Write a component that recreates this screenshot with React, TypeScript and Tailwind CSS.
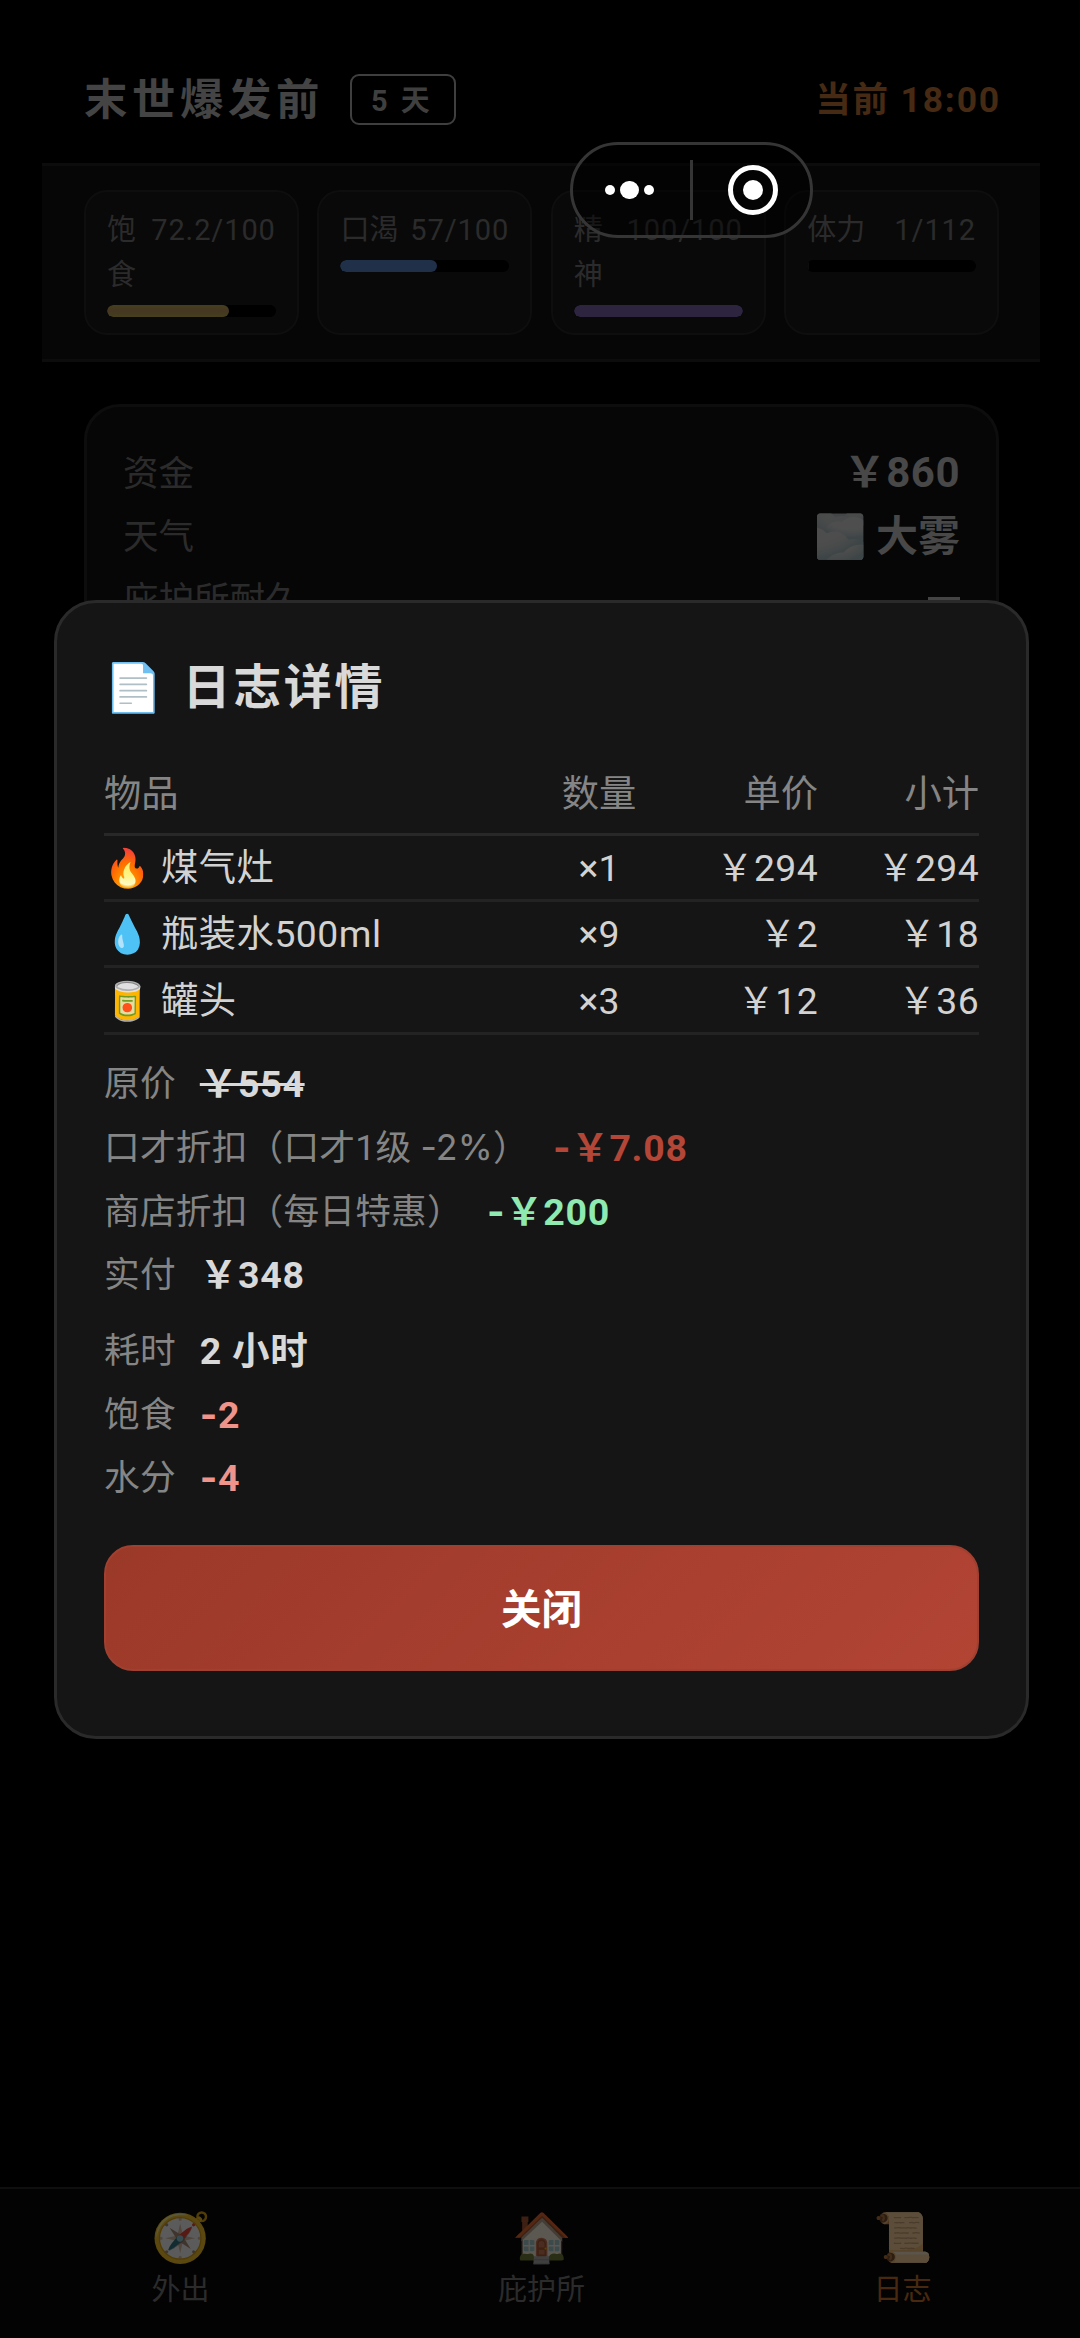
type Stat = {
  name: string;
  value: string;
  percent: number;
  bar: string;
};

type LogItem = {
  icon: string;
  name: string;
  qty: string;
  price: string;
  total: string;
};

type SummaryLine = {
  label: string;
  value: string;
  tone: string;
};

const stats: Stat[] = [
  { name: "饱食", value: "72.2/100", percent: 72.2, bar: "bg-linear-to-b from-[#453f1d] via-[#453722] to-[#453f1d]" },
  { name: "口渴", value: "57/100", percent: 57, bar: "bg-[#1f3048]" },
  { name: "精神", value: "100/100", percent: 100, bar: "bg-[#2d2440]" },
  { name: "体力", value: "1/112", percent: 1, bar: "bg-[#0c0c0c]" },
];

const items: LogItem[] = [
  { icon: "🔥", name: "煤气灶", qty: "×1", price: "￥294", total: "￥294" },
  { icon: "💧", name: "瓶装水500ml", qty: "×9", price: "￥2", total: "￥18" },
  { icon: "🥫", name: "罐头", qty: "×3", price: "￥12", total: "￥36" },
];

const costLines: SummaryLine[] = [
  { label: "原价", value: "￥554", tone: "text-[#d9d9d9] line-through" },
  { label: "口才折扣（口才1级 -2%）", value: "-￥7.08", tone: "text-[#b34636]" },
  { label: "商店折扣（每日特惠）", value: "-￥200", tone: "text-[#8eeab0]" },
  { label: "实付", value: "￥348", tone: "text-[#d9d9d9]" },
];

const effectLines: SummaryLine[] = [
  { label: "耗时", value: "2 小时", tone: "text-[#d9d9d9]" },
  { label: "饱食", value: "-2", tone: "text-[#f0938a]" },
  { label: "水分", value: "-4", tone: "text-[#f0938a]" },
];

const tabs = [
  { icon: "🧭", label: "外出", active: false },
  { icon: "🏠", label: "庇护所", active: false },
  { icon: "📜", label: "日志", active: true },
];

// Minus signs and percents use Inter, whose hyphen is wider than Roboto's.
function Signed({ text }: { text: string }) {
  return (
    <>
      {text.split(/(-2%|-)/).map((part, i) =>
        part.startsWith("-") ? (
          <span key={i} className="font-[Inter,sans-serif]">
            {part}
          </span>
        ) : (
          part
        ),
      )}
    </>
  );
}

function TopBar() {
  return (
    <header className="mr-[40px] ml-[42px] flex h-[166px] items-center justify-between border-b-[3px] border-[#0c0c0c] pt-[36px] pr-[39px] pl-[42px]">
      <div className="flex items-center">
        <h1 className="pt-[2px] text-[43.4px] leading-[60px] font-bold tracking-[4.6px] text-[#444]">末世爆发前</h1>
        <span className="ml-[26px] flex h-[51px] w-[106px] items-center justify-center rounded-[9px] border-[2.5px] border-[#3f3f3f] pt-[3px] pr-[2px] text-[29px] leading-none font-bold tracking-[3px] text-[#3f3f3f]">
          5 天
        </span>
      </div>
      <span className="text-[35.5px] leading-[48px] font-bold tracking-[1.8px] text-[#472a13]">当前 18:00</span>
    </header>
  );
}

function StatCard({ stat }: { stat: Stat }) {
  return (
    <div className="h-[145px] rounded-[23px] border-[2.5px] border-[#0e0e0e] bg-[#090909] px-[21px] pt-[16px]">
      <div className="flex justify-between text-[29px] leading-[45px] text-[#2b2b2b]">
        <span className="min-w-0">{stat.name}</span>
        <span className="shrink-0 tracking-[0.9px]">{stat.value}</span>
      </div>
      <div className="mt-[6.5px] h-[12.5px] overflow-hidden rounded-full bg-black">
        <div className={`h-full rounded-full ${stat.bar}`} style={{ width: `${stat.percent}%` }} />
      </div>
    </div>
  );
}

function InfoCard() {
  return (
    <section className="mt-[42px] mr-[81px] ml-[84px] h-[360px] rounded-[36px] border-[3px] border-[#0d0d0d] bg-[#060606] px-[36px] pt-[35.5px] text-[35.5px] leading-[63px] text-[#2b2b2b]">
      <div className="flex justify-between">
        <span>资金</span>
        <span className="-mt-[2px] text-[42px] font-bold tracking-[0.5px] text-[#484848]">￥860</span>
      </div>
      <div className="flex justify-between">
        <span>天气</span>
        <span className="-mt-[2px] flex items-center text-[42px] font-bold text-[#484848]">
          <span className="mr-[10px] opacity-30">🌫️</span>
          大雾
        </span>
      </div>
      <div className="flex justify-between">
        <span>庇护所耐久</span>
        <span className="mt-[28px] h-[5px] w-[32px] bg-[#444]" />
      </div>
    </section>
  );
}

function Capsule() {
  return (
    <div className="absolute top-[142px] left-[570px] flex h-[96px] w-[243px] items-center rounded-full border-[3px] border-[#353535] bg-black/45">
      <div className="flex w-[117px] items-center justify-center gap-[5px] pr-[4px]">
        <i className="size-[10.5px] rounded-full bg-white" />
        <i className="size-[18.5px] rounded-full bg-white" />
        <i className="size-[10.5px] rounded-full bg-white" />
      </div>
      <div className="h-[60px] w-[3px] bg-[#353535]" />
      <div className="flex flex-1 items-center justify-center pl-[2px]">
        <div className="flex size-[50px] items-center justify-center rounded-full border-[5px] border-white">
          <i className="size-[20px] rounded-full bg-white" />
        </div>
      </div>
    </div>
  );
}

function Summary({ lines }: { lines: SummaryLine[] }) {
  return (
    <>
      {lines.map((line) => (
        <div key={line.label} className="flex h-[63.7px] items-center gap-[24px] pt-[4px]">
          <span className="text-[35.7px] tracking-[0.2px] text-[#858585]">
            <Signed text={line.label} />
          </span>
          <span className={`-mt-px text-[37.5px] font-bold tracking-[0.7px] ${line.tone}`}>
            <Signed text={line.value} />
          </span>
        </div>
      ))}
    </>
  );
}

function LogDialog() {
  return (
    <div
      role="dialog"
      className="absolute top-[600px] left-[54px] h-[1139px] w-[975px] rounded-[42px] border-[3px] border-[#2a2a2a] bg-[#151515] px-[47px]"
    >
      <h2 className="mt-[53px] flex h-[64px] items-center text-[48px] font-bold tracking-[2.6px] text-[#d9d9d9]">
        <span className="mr-[17px] text-[47px]">📄</span>
        日志详情
      </h2>

      <div className="mt-[33px] text-[37.3px] text-[#d2d2d2]">
        <div className="flex h-[83px] items-center border-b-[3px] border-[#282828] pt-[3px] text-[#858585]">
          <span className="flex-1">物品</span>
          <span className="w-[130px] text-center">数量</span>
          <span className="w-[154px] text-right">单价</span>
          <span className="w-[161px] text-right">小计</span>
        </div>
        {items.map((item) => (
          <div key={item.name} className="flex h-[66.2px] items-center border-b-[3px] border-[#232323] pt-[3px]">
            <span className="flex flex-1 items-center">
              <span className="w-[57px]">{item.icon}</span>
              <span className="tracking-[0.5px]">{item.name}</span>
            </span>
            <span className="w-[130px] text-center">{item.qty}</span>
            <span className="w-[154px] text-right tracking-[0.4px]">{item.price}</span>
            <span className="w-[161px] text-right tracking-[0.4px]">{item.total}</span>
          </div>
        ))}
      </div>

      <div className="mt-[16.5px]">
        <Summary lines={costLines} />
      </div>
      <div className="mt-[12px]">
        <Summary lines={effectLines} />
      </div>

      <button
        type="button"
        className="mt-[36px] flex h-[126px] w-full items-center justify-center rounded-[29px] border-[2px] border-[#a04030] bg-linear-135 from-[#9b3929] to-[#b24434] pt-[4px] text-[40.5px] font-bold text-white"
      >
        关闭
      </button>
    </div>
  );
}

function TabBar() {
  return (
    <nav className="mt-auto -mr-[3px] flex h-[151px] border-t-[2.5px] border-[#0f0f0f] bg-[#030303]">
      {tabs.map((tab) => (
        <div
          key={tab.label}
          className={`flex flex-1 flex-col items-center pt-[18px] text-[29px] leading-[42px] ${
            tab.active ? "text-[#48290f]" : "text-[#2b2b2b]"
          }`}
        >
          <span className="text-[48px] leading-[62px] opacity-35">{tab.icon}</span>
          <span>{tab.label}</span>
        </div>
      ))}
    </nav>
  );
}

export default function App() {
  return (
    <div className="relative flex h-[2338px] w-[1080px] flex-col overflow-hidden bg-black font-[Roboto,'Noto_Sans_CJK_SC',sans-serif]">
      <TopBar />
      <section className="mr-[40px] ml-[42px] grid h-[196px] grid-cols-4 gap-[18.6px] border-b-[3px] border-[#0c0c0c] bg-[#060606] pt-[24px] pr-[41px] pl-[42px]">
        {stats.map((stat) => (
          <StatCard key={stat.name} stat={stat} />
        ))}
      </section>
      <InfoCard />
      <TabBar />
      <Capsule />
      <LogDialog />
    </div>
  );
}
